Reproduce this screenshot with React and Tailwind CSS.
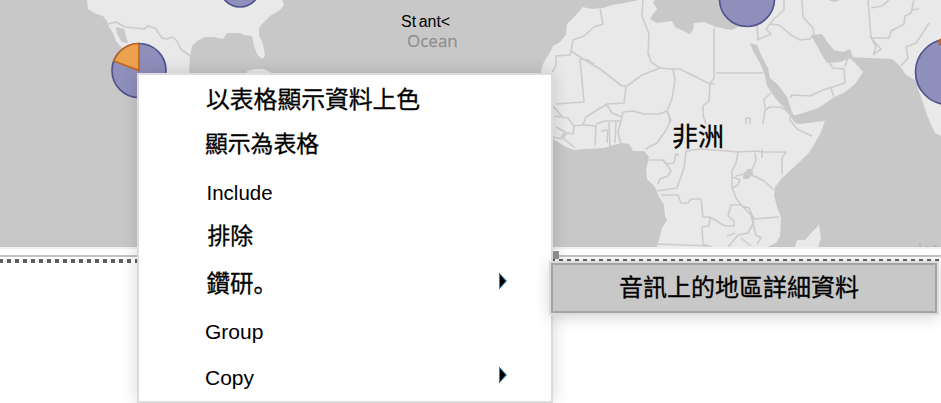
import React from 'react';

const LAND = [
  // North America
  'M87 0 88 9 94 13 103 16 107 21 109 27 113 33 116 41 121 47 127 50 138 73 189 73 190 56 192 46 197 41 205 37 214 37 223 39 227 33 240 33 244 35 252 36 254 46 257 54 262 59 265 56 263 44 259 35 259 28 264 22 270 16 280 10 284 5 282 0Z',
  // Cuba
  'M247 71 254 69 264 69 272 73 247 73Z',
  // Africa, Europe and Asia
  'M581 0 582 8 575 16 567 24 566 35 560 42 553 46 549 54 544 62 541 70 540 130 553 139 566 147 574 150 585 149 604 148 614 145 622 143 629 144 633 151 644 151 649 157 646 170 647 179 655 187 658 195 664 205 665 216 667 220 662 228 660 236 657 247 767 247 776 243 780 236 781 217 777 207 774 195 775 187 782 178 793 168 808 154 815 143 821 132 825 121 800 124 795 123 790 116 800 114 818 108 833 98 845 92 855 84 863 72 858 66 849 57 870 58 892 59 900 66 906 75 915 80 921 97 927 115 932 127 935 133 941 136 941 0Z',
  // Madagascar
  'M795 247 797 240 805 240 813 231 819 225 821 238 818 247Z',
];

const SEA = [
  'M116 27 124 29 128 43 122 42 117 34Z',
  'M581 0 582 7 592 9 603 8 612 5 624 3 639 0Z',
  'M653 2 657 9 653 14 650 19 657 23 672 21 675 27 690 34 693 30 694 23 704 22 716 27 731 30 738 27 745 26 762 24 765 0 655 0Z',
  'M750 43 757 45 762 57 768 68 770 78 778 85 787 97 792 112 796 120 789 115 785 109 776 99 767 86 765 76 760 63 753 51Z',
  'M811 35 822 34 828 43 834 50 843 52 850 49 853 57 848 59 840 62 827 63 822 55Z',
  'M828 0 840 0 835 2Z',
  'M744 173 748 169 752 169 753 174 748 179 743 179Z',
];

const BORDERS = [
  'M108 24 116 22 125 27 144 29 148 26 155 28 162 38 167 39 172 37 177 41 181 49 190 56',
  'M600 9 603 24 594 27 584 36 573 40 571 51 580 57 600 69 622 86 627 86 642 75 660 68 651 62 648 53 649 34 642 16 643 0',
  'M571 51 570 55 556 56 556 66 552 72',
  'M589 60 580 59 584 102 556 104M587 60 594 64M626 87 624 103 607 104 594 112 586 117 583 125 574 126 568 118 555 116M553 106 560 114 563 118',
  'M607 105 612 113 622 117 623 112 633 111 644 114 659 114 667 111 671 120 666 130 657 143 647 148 646 150',
  'M660 68 673 69 680 69 710 84 714 78 714 28M673 69 675 80 672 99 667 111M710 84 709 101 703 106 703 115 706 124',
  'M716 73H763M710 84H715',
  'M583 125 596 126 595 145M596 124 605 121 622 121M609 122 610 146M616 121 615 143M622 117 618 132 621 145M574 126 573 134 567 133 563 138 575 148',
  'M556 127 565 132 561 138M553 137 562 139M601 131 608 130 607 143',
  'M649 160H664L667 165 671 171 668 176 660 179 658 184M662 160 666 164 674 163 676 154 679 155M686 151 684 168 677 188 657 191',
  'M661 195 678 195 681 203 688 203 691 199 701 199 703 217 710 217 725 226 734 226 734 221 728 216 731 205 742 205',
  'M710 218 709 226 702 227 703 244 714 248M657 244 710 246',
  'M686 151 700 149 728 151 738 152 736 163 732 171 732 187 736 198 742 206 751 215 754 223',
  'M738 152 756 151 762 152 786 152 782 158 782 174M755 153 756 160 752 170M736 176 744 174 754 176 764 181 774 190M733 177 740 180 738 185 732 188',
  'M742 206 749 208 754 219 779 217M754 222 748 233 738 235 728 247M741 238 751 246M750 211 756 235 761 238 757 244M727 236 735 233',
  'M763 124 765 110 770 107 780 107 791 113 790 120 797 129 812 136M765 108 764 99 771 93M762 149 762 158',
  'M757 24 758 40M757 40 771 34 766 29 770 24 779 25 791 35 800 40 810 39 814 34M784 0 784 10 773 20 770 24M802 0 803 17 813 28 814 34',
  'M790 98 792 95 810 96 823 90 845 83 844 69 833 68 828 61M845 67 848 57M831 88 834 97',
  'M868 0 871 37 876 47 873 55M871 8 882 6 889 0M871 38H889L891 31 904 24 905 16 911 13 914 0M873 55 881 49 870 37M911 10 919 9M929 23 924 31 916 43 906 47 908 58 901 66',
  'M668 112 670 123M746 124 746 118H750V124',
];

function PieMarker({ cx, cy, r, slice }) {
  return (
    <g strokeWidth="1.7">
      <circle cx={cx} cy={cy} r={r} fill="#8f8fbc" stroke="#53538f" />
      {slice && <path d={slice} fill="#eaa24e" stroke="#c5651b" />}
    </g>
  );
}

function WorldMap() {
  return (
    <div className="relative h-[247px] shrink-0 overflow-hidden bg-[#c8c8c8]">
      <svg className="block" width="941" height="247" viewBox="0 0 941 247">
        {LAND.map((d) => <path key={d} d={d} fill="#e9e9e9" />)}
        {SEA.map((d) => <path key={d} d={d} fill="#c8c8c8" />)}
        <g fill="none" stroke="#cfcbcb" strokeWidth="1.6" strokeLinejoin="round">
          {BORDERS.map((d) => <path key={d} d={d} />)}
        </g>
        <PieMarker cx={240} cy={-13} r={20} />
        <PieMarker cx={747} cy={-1} r={27.5} />
        <PieMarker cx={139} cy={70.5} r={27} slice="M139 70.5V43.5A27 27 0 0 0 114 61Z" />
        <PieMarker cx={948} cy={72} r={32.5} slice="M941 43V39.5L939.5 40V44Z" />
        <path d="M920 243V249M925 247H929M933 246H937" stroke="#a8a8a8" fill="none" />
      </svg>
      <span className="absolute left-[401px] top-[13px] whitespace-pre text-[16px] leading-[18px] text-black">St<span className="ml-[2.5px]">ant&lt;</span></span>
      <span className="absolute left-[407px] top-[31px] font-['Open_Sans','Noto_Sans',sans-serif] text-[17px] leading-5 text-[#8f8f8f] [-webkit-text-stroke:0.4px_#8f8f8f] [text-shadow:0_0_2px_#dedede]">Ocean</span>
      <span className="absolute left-[672px] top-[119px] text-[26px] leading-9 text-black [-webkit-text-stroke:0.3px_black]">非洲</span>
    </div>
  );
}

function SelectionEdge() {
  return (
    <div className="h-4 shrink-0">
      <div className="h-0.5 bg-[#f0f0f0]" />
      <div className="mt-1.5 h-0.5 bg-[#c4c4c4]" />
      <div className="flex pt-0.5">
        <div className="h-1 w-[553px] bg-[repeating-linear-gradient(90deg,#606060_0_3px,transparent_3px_7px,#606060_7px_8px)]" />
        <div className="h-0.5 flex-1 bg-[repeating-linear-gradient(90deg,#606060_0_2px,transparent_2px_6px,#606060_6px_8px)]" />
      </div>
    </div>
  );
}

function MenuItem({ label, className, submenu }) {
  return (
    <div className={`flex items-center justify-between pr-[44px] ${className}`}>
      <span className="whitespace-nowrap">{label}</span>
      {submenu && (
        <svg className="mb-1.5" width="8" height="16" viewBox="0 0 8 16">
          <path d="M1 0.5 8 8 1 15.5Z" fill="#247ab5" />
          <path d="M0 0H1V16H0Z" fill="#b35a14" />
          <path d="M1 1.5 6.5 8 1 14.5Z" fill="#000" />
        </svg>
      )}
    </div>
  );
}

export default function App() {
  return (
    <div className="relative flex h-[403px] w-[941px] flex-col overflow-hidden bg-white font-['Liberation_Sans','Noto_Sans_CJK_TC',sans-serif]">
      <WorldMap />
      <SelectionEdge />
      <div className="absolute left-[553px] top-[251px] h-2 w-1.5 bg-[#969696]" />

      <div className="absolute left-[137px] top-[73px] flex h-[330px] w-[416px] flex-col border-2 border-[#dcdcdc] bg-white pt-0.5 text-[21px] text-black shadow-[0_0_16px_rgba(0,0,0,0.16)]">
        <MenuItem label="以表格顯示資料上色" className="h-[45px] pl-[67px] text-[23.8px] [-webkit-text-stroke:0.3px_black]" />
        <MenuItem label="顯示為表格" className="h-[44px] pl-[66px] text-[22.8px] [-webkit-text-stroke:0.3px_black]" />
        <MenuItem label="Include" className="h-[53px] pl-[67.5px] pt-0.5 text-[20.5px]" />
        <MenuItem label="排除" className="h-[34px] pl-[68.5px] text-[22.8px] [-webkit-text-stroke:0.3px_black]" />
        <MenuItem label={<>鑽研<span className="font-['Noto_Sans_CJK_JP',sans-serif]">。</span></>} className="h-[60px] pl-[67.5px] pt-0.5 text-[23.5px] [-webkit-text-stroke:0.3px_black]" submenu />
        <MenuItem label="Group" className="h-[38px] pl-[66px]" />
        <MenuItem label="Copy" className="h-[50px] pl-[66px] pt-1" submenu />
      </div>

      <div className="absolute left-[549px] top-[261px] h-[54px] w-[390px] border-2 border-[#dcdcdc] shadow-[0_3px_14px_rgba(0,0,0,0.16)]">
        <div className="flex h-full items-center border-2 border-[#a3a3a3] bg-[#c8c8c8] pl-[66px] text-[24px] text-black [-webkit-text-stroke:0.3px_black]">
          音訊上的地區詳細資料
        </div>
      </div>
    </div>
  );
}
